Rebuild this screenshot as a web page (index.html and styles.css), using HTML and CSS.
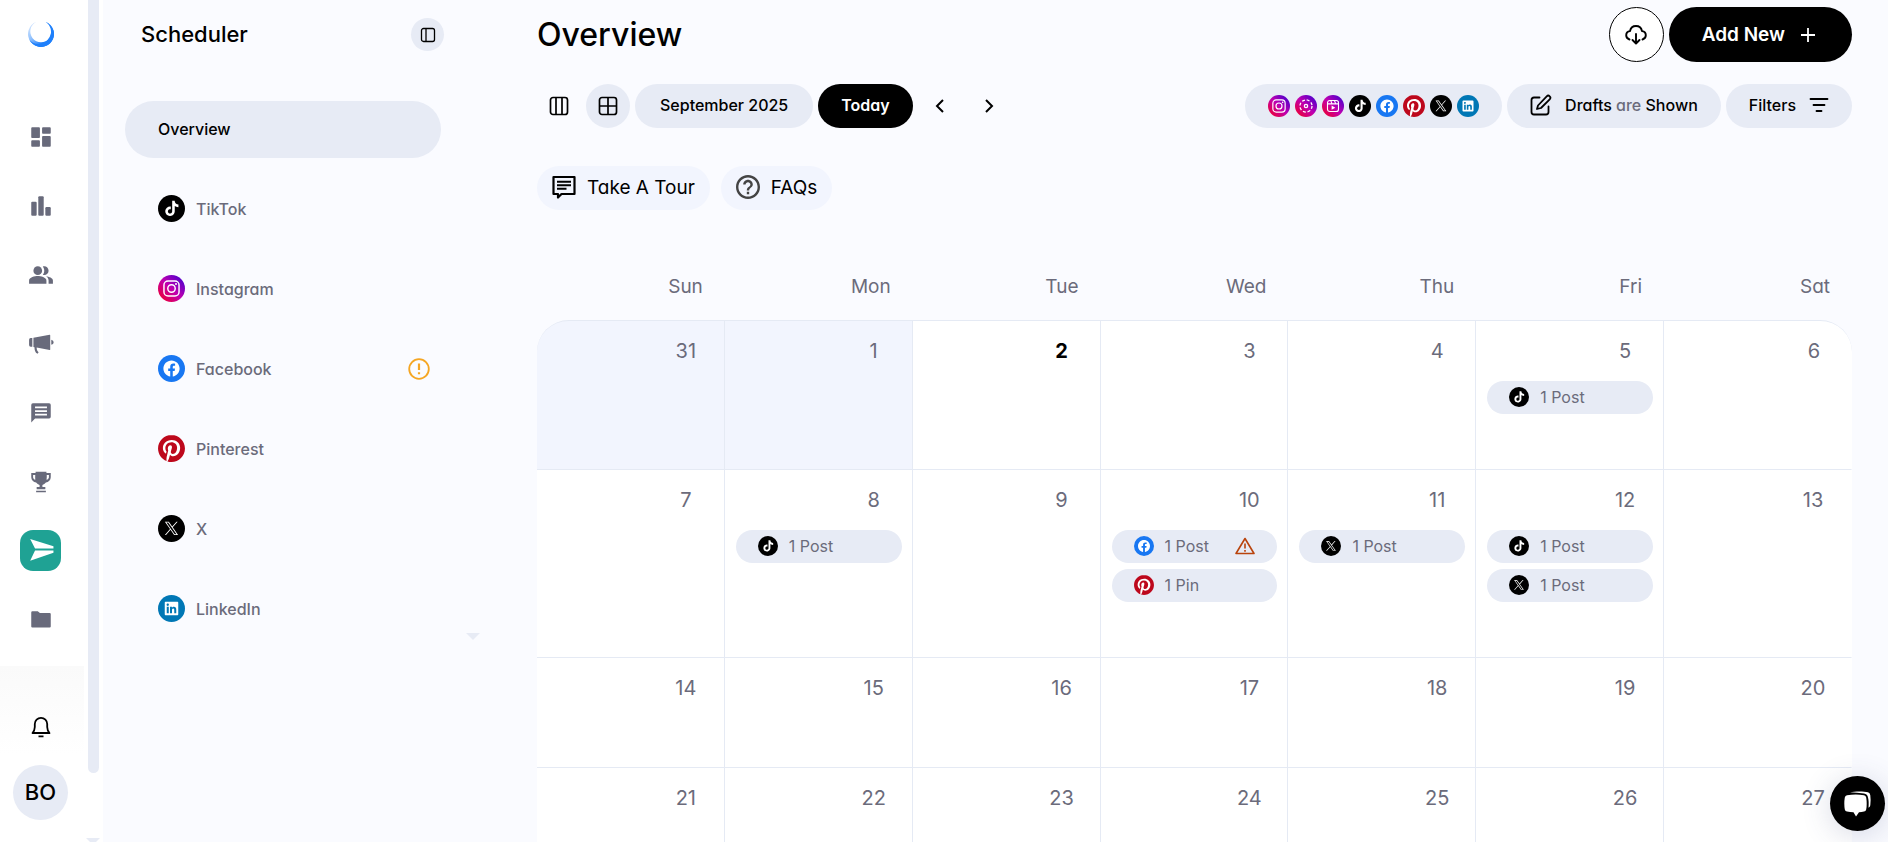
FILE: index.html
```
<!DOCTYPE html>
<html lang="en">

<head>
    <meta charset="UTF-8">
    <meta name="viewport" content="width=device-width, initial-scale=1.0">
    <title>Scheduler</title>
    <link rel="stylesheet" href="styles.css">
</head>

<body>

    <!-- Shared icons -->
    <svg class="sprite" aria-hidden="true">
        <defs>
            <linearGradient id="igGradient" x1="0" y1="1" x2="1" y2="0">
                <stop offset="0.05" stop-color="#f00028" />
                <stop offset="0.5" stop-color="#c000b0" />
                <stop offset="0.95" stop-color="#3f00d0" />
            </linearGradient>
            <linearGradient id="logoGradient" x1="0" y1="0.2" x2="0.6" y2="0.8">
                <stop offset="0" stop-color="#d3e5fe" />
                <stop offset="0.5" stop-color="#8fc0fd" />
                <stop offset="1" stop-color="#1f80fb" />
            </linearGradient>
        </defs>
        <symbol id="tiktok" viewBox="0 0 24 24">
            <circle cx="12" cy="12" r="12" />
            <path transform="translate(5.6 5.2) scale(.56)" fill="#fff" d="M12.525.02c1.31-.02 2.61-.01 3.91-.02.08 1.53.63 3.09 1.75 4.17 1.12 1.11 2.7 1.62 4.24 1.79v4.03c-1.44-.05-2.89-.35-4.2-.97-.57-.26-1.1-.59-1.62-.93-.01 2.92.01 5.84-.02 8.75-.08 1.4-.54 2.79-1.35 3.94-1.31 1.92-3.58 3.17-5.91 3.21-1.43.08-2.86-.31-4.08-1.03-2.02-1.19-3.44-3.37-3.65-5.71-.02-.5-.03-1-.01-1.49.18-1.9 1.12-3.72 2.58-4.96 1.66-1.44 3.98-2.13 6.15-1.72.02 1.48-.04 2.96-.04 4.44-.99-.32-2.15-.23-3.02.37-.63.41-1.11 1.04-1.36 1.75-.21.51-.15 1.07-.14 1.61.24 1.64 1.82 3.02 3.5 2.87 1.12-.01 2.19-.66 2.77-1.61.19-.33.4-.67.41-1.06.1-1.79.06-3.57.07-5.36.01-4.03-.01-8.05.02-12.07z" />
        </symbol>
        <symbol id="instagram" viewBox="0 0 24 24">
            <circle cx="12" cy="12" r="12" fill="url(#igGradient)" />
            <g fill="none" stroke="#fff" stroke-width="1.3">
                <rect x="5.3" y="5.3" width="13.4" height="13.4" rx="3.6" />
                <circle cx="12" cy="12" r="3.3" />
            </g>
            <circle cx="16" cy="8" r=".9" fill="#fff" />
        </symbol>
        <symbol id="story" viewBox="0 0 24 24">
            <circle cx="12" cy="12" r="12" fill="url(#igGradient)" />
            <g fill="none" stroke="#fff" stroke-width="1.4">
                <circle cx="12" cy="12" r="6.6" stroke-dasharray="3.2 1.98" />
                <circle cx="12" cy="12" r="1.8" />
            </g>
        </symbol>
        <symbol id="reel" viewBox="0 0 24 24">
            <circle cx="12" cy="12" r="12" fill="url(#igGradient)" />
            <path d="M8.5 6h7A2.5 2.5 0 0 1 18 8.5v7a2.5 2.5 0 0 1-2.5 2.5h-7A2.5 2.5 0 0 1 6 15.5v-7A2.5 2.5 0 0 1 8.5 6zM6 9.7h12M9.5 6l1.5 3.7M13.5 6l1.5 3.7" fill="none" stroke="#fff" stroke-width="1.2" />
            <path d="M10.5 11.5v4.6l4-2.3z" fill="#fff" />
        </symbol>
        <symbol id="facebook" viewBox="0 0 24 24">
            <circle cx="12" cy="12" r="12" fill="#1877f2" />
            <path transform="translate(4.8 4.8) scale(.6)" fill="#fff" d="M24 12.073c0-6.627-5.373-12-12-12s-12 5.373-12 12c0 5.99 4.388 10.954 10.125 11.854v-8.385H7.078v-3.47h3.047V9.43c0-3.007 1.792-4.669 4.533-4.669 1.312 0 2.686.235 2.686.235v2.953H15.83c-1.491 0-1.956.925-1.956 1.874v2.25h3.328l-.532 3.47h-2.796v8.385C19.612 23.027 24 18.062 24 12.073z" />
        </symbol>
        <symbol id="pinterest" viewBox="0 0 24 24">
            <circle cx="12" cy="12" r="11.5" fill="#fff" />
            <path fill="#bd081c" d="M12.017 0C5.396 0 .029 5.367.029 11.987c0 5.079 3.158 9.417 7.618 11.162-.105-.949-.199-2.403.041-3.439.219-.937 1.406-5.957 1.406-5.957s-.359-.72-.359-1.781c0-1.663.967-2.911 2.168-2.911 1.024 0 1.518.769 1.518 1.688 0 1.029-.653 2.567-.992 3.992-.285 1.193.6 2.165 1.775 2.165 2.128 0 3.768-2.245 3.768-5.487 0-2.861-2.063-4.869-5.008-4.869-3.41 0-5.409 2.562-5.409 5.199 0 1.033.394 2.143.889 2.741.099.12.112.225.085.345-.09.375-.293 1.199-.334 1.363-.053.225-.172.271-.401.165-1.495-.69-2.433-2.878-2.433-4.646 0-3.776 2.748-7.252 7.92-7.252 4.158 0 7.392 2.967 7.392 6.923 0 4.135-2.607 7.462-6.233 7.462-1.214 0-2.354-.629-2.758-1.379l-.749 2.848c-.269 1.045-1.004 2.352-1.498 3.146 1.123.345 2.306.535 3.55.535 6.607 0 11.985-5.365 11.985-11.987C23.97 5.39 18.592.026 11.985.026L12.017 0z" />
        </symbol>
        <symbol id="x" viewBox="0 0 24 24">
            <circle cx="12" cy="12" r="12" />
            <path transform="translate(6.1 6) scale(.49)" fill="#fff" d="M14.258 10.152 23.176 0h-2.113l-7.747 8.813L7.133 0H0l9.352 13.328L0 23.973h2.113l8.176-9.309 6.531 9.309h7.133zm-2.895 3.293-.949-1.328L2.875 1.56h3.246l6.086 8.523.945 1.328 7.91 11.078h-3.246z" />
        </symbol>
        <symbol id="linkedin" viewBox="0 0 24 24">
            <circle cx="12" cy="12" r="12" fill="#0077b5" />
            <path transform="translate(6 6) scale(.5)" fill="#fff" d="M20.447 20.452h-3.554v-5.569c0-1.328-.027-3.037-1.852-3.037-1.853 0-2.136 1.445-2.136 2.939v5.667H9.351V9h3.414v1.561h.046c.477-.9 1.637-1.85 3.37-1.85 3.601 0 4.267 2.37 4.267 5.455v6.286zM5.337 7.433c-1.144 0-2.063-.926-2.063-2.065 0-1.138.92-2.063 2.063-2.063 1.14 0 2.064.925 2.064 2.063 0 1.139-.925 2.065-2.064 2.065zm1.782 13.019H3.555V9h3.564v11.452zM22.225 0H1.771C.792 0 0 .774 0 1.729v20.542C0 23.227.792 24 1.771 24h20.451C23.2 24 24 23.227 24 22.271V1.729C24 .774 23.2 0 22.222 0h.003z" />
        </symbol>
    </svg>

    <div class="app">

        <aside class="rail">
            <a class="logo" href="#" aria-label="Home">
                <svg viewBox="0 0 26 26">
                    <path d="M8.5.8A13 13 0 1 0 17.5.8 10.700 10.700 0 1 1 8.5.8z" fill="url(#logoGradient)" />
                    <path d="M17.5.8A13 13 0 1 1 1 18Q4 23 11 23 21 22 23 12 23.5 5 17.5.8z" fill="#1f80fb" />
                </svg>
            </a>
            <nav class="rail-nav">
                <a href="#" aria-label="Dashboard"><svg viewBox="0 0 24 24"><path d="M4 13h6c.55 0 1-.45 1-1V4c0-.55-.45-1-1-1H4c-.55 0-1 .45-1 1v8c0 .55.45 1 1 1zm0 8h6c.55 0 1-.45 1-1v-4c0-.55-.45-1-1-1H4c-.55 0-1 .45-1 1v4c0 .55.45 1 1 1zm10 0h6c.55 0 1-.45 1-1v-8c0-.55-.45-1-1-1h-6c-.55 0-1 .45-1 1v8c0 .55.45 1 1 1zM13 4v4c0 .55.45 1 1 1h6c.55 0 1-.45 1-1V4c0-.55-.45-1-1-1h-6c-.55 0-1 .45-1 1z" /></svg></a>
                <a href="#" aria-label="Analytics"><svg viewBox="0 0 24 24"><rect x="3" y="8" width="5" height="13" rx="1" /><rect x="9.5" y="3" width="5" height="18" rx="1" /><rect x="16" y="13" width="5" height="8" rx="1" /></svg></a>
                <a href="#" aria-label="Audience"><svg viewBox="0 0 24 24"><path d="M16.67 13.13C18.04 14.06 19 15.32 19 17v3h4v-3c0-2.18-3.57-3.47-6.33-3.87z" /><circle cx="9" cy="8" r="4" /><path d="M15 12c2.21 0 4-1.79 4-4s-1.79-4-4-4c-.47 0-.91.1-1.33.24C14.5 5.27 15 6.58 15 8s-.5 2.73-1.33 3.76c.42.14.86.24 1.33.24zM9 13c-2.67 0-8 1.34-8 4v3h16v-3c0-2.66-5.33-4-8-4z" /></svg></a>
                <a href="#" aria-label="Campaigns"><svg viewBox="0 0 24 24"><path d="M2.500 6.500H4v8H2.500Q1 14.500 1 13V8Q1 6.500 2.500 6.500zM5 6.300 20 3.500q.5 0 .5.5v13q0 .5-.5.5L8 15.200c0 2 .5 3 1.800 4.500l-1 1.300C6.500 19.800 6 17.500 6 14.900l-1-.2zM21.500 8q2.200.5 2.200 2.300t-2.200 2.400z" /></svg></a>
                <a href="#" aria-label="Messages"><svg viewBox="0 0 24 24"><path fill-rule="evenodd" d="M4.500 3h15Q21 3 21 4.500v11q0 1.500-1.500 1.500H6.500L3 20.800V4.500Q3 3 4.500 3zM6.500 6v1.700h11V6zm0 3.400v1.700h11V9.400zm0 3.300v1.700h11v-1.700z" /></svg></a>
                <a href="#" aria-label="Contests"><svg viewBox="0 0 24 24"><path fill-rule="evenodd" d="M7 2.500h10v1.300h4V7.500c0 2.500-2 4.300-4.500 5-.8 1-2 1.900-3.200 2.300V16.500H16v2.200H8v-2.200h2.700v-1.700C9.500 14.400 8.300 13.500 7.500 12.500 5 11.800 3 10 3 7.500V3.800h4zm-2.300 3v2c0 1 .8 2 2 2.500Q6.500 7.500 6.700 5.500zm12.600 0q.2 2-.2 4.500c1.400-.5 2.200-1.500 2.200-2.500v-2zM7.500 20h9v1.500h-9z" /></svg></a>
                <a class="active" href="#" aria-label="Scheduler"><svg viewBox="0 0 24 24"><path d="M2 1 23.500 7.500v2.300H6.500zM6.500 11.500h17v2.200L2 21z" /></svg></a>
                <a href="#" aria-label="Library"><svg viewBox="0 0 24 24"><path d="M4 4h5l2 1.500h9q1 0 1 1V18q0 1-1 1H4q-1 0-1-1V5q0-1 1-1z" /></svg></a>
            </nav>
            <div class="rail-footer">
                <button class="bell" aria-label="Notifications">
                    <svg viewBox="0 0 20 22" fill="none" stroke="#000" stroke-width="1.8"><path d="M1.500 17q2.200-2.300 2.300-6V8a6.200 6.200 0 0 1 12.400 0v3q.1 3.700 2.300 6zM7.500 20.300h5" stroke-linejoin="round" /></svg>
                </button>
                <button class="avatar">BO</button>
            </div>
            <span class="scroll-thumb"></span>
            <span class="scroll-arrow"></span>
        </aside>

        <aside class="sidebar">
            <div class="sidebar-head">
                <h2>Scheduler</h2>
                <button class="collapse" aria-label="Collapse sidebar">
                    <svg viewBox="0 0 16 16" fill="none" stroke="#000" stroke-width="1.3"><rect x="1.5" y="1.5" width="13" height="13" rx="2" /><path d="M6 1.500v13" /></svg>
                </button>
            </div>
            <nav class="channels">
                <a class="active" href="#">Overview</a>
                <a href="#"><svg><use href="#tiktok" /></svg>TikTok</a>
                <a href="#"><svg><use href="#instagram" /></svg>Instagram</a>
                <a href="#"><svg><use href="#facebook" /></svg>Facebook
                    <svg class="alert" viewBox="0 0 22 22" fill="none" stroke="#f5a623" stroke-width="1.8"><circle cx="11" cy="11" r="9.8" /><path d="M11 5.500v6.500M11 14.200v2" stroke-width="2.200" /></svg>
                </a>
                <a href="#"><svg><use href="#pinterest" /></svg>Pinterest</a>
                <a href="#"><svg><use href="#x" /></svg>X</a>
                <a href="#"><svg><use href="#linkedin" /></svg>LinkedIn</a>
            </nav>
            <span class="scroll-arrow"></span>
        </aside>

        <main>
            <header class="page-head">
                <h1>Overview</h1>
                <div class="actions">
                    <button class="download" aria-label="Download">
                        <svg viewBox="0 0 22 22" fill="none" stroke="#000" stroke-width="1.9" stroke-linecap="round" stroke-linejoin="round"><path d="M4.500 15.500C2.500 14.800 1.200 13.200 1.200 11.200 1.200 9 2.800 7.400 5 7.100 5.600 4 8 2 11 2s5.400 2 6 5.100c2.200.3 3.800 1.900 3.800 4.100 0 2-1.300 3.600-3.300 4.300M11 10v9M7.500 16l3.500 3.500 3.500-3.500" /></svg>
                    </button>
                    <button class="add-new">Add New
                        <svg viewBox="0 0 16 16" fill="none" stroke="#fff" stroke-width="1.8"><path d="M8 1v14M1 8h14" /></svg>
                    </button>
                </div>
            </header>

            <div class="toolbar">
                <div class="group">
                    <button class="round" aria-label="Week view">
                        <svg viewBox="0 0 20 20" fill="none" stroke="#000" stroke-width="1.7"><rect x="1.5" y="1.5" width="17" height="17" rx="2.5" /><path d="M7 1.500v17M13 1.500v17" /></svg>
                    </button>
                    <button class="round selected" aria-label="Month view">
                        <svg viewBox="0 0 20 20" fill="none" stroke="#000" stroke-width="1.7"><rect x="1.5" y="1.5" width="17" height="17" rx="2.5" /><path d="M10 1.500v17M1.500 10h17" /></svg>
                    </button>
                    <button class="pill">September 2025</button>
                    <button class="pill today-btn">Today</button>
                    <button class="round" aria-label="Previous month">
                        <svg viewBox="0 0 20 20" fill="none" stroke="#000" stroke-width="2"><path d="M13 4 7 10l6 6" /></svg>
                    </button>
                    <button class="round" aria-label="Next month">
                        <svg viewBox="0 0 20 20" fill="none" stroke="#000" stroke-width="2"><path d="M7 4l6 6-6 6" /></svg>
                    </button>
                </div>
                <div class="group">
                    <button class="pill networks" aria-label="Networks">
                        <svg><use href="#instagram" /></svg>
                        <svg><use href="#story" /></svg>
                        <svg><use href="#reel" /></svg>
                        <svg><use href="#tiktok" /></svg>
                        <svg><use href="#facebook" /></svg>
                        <svg><use href="#pinterest" /></svg>
                        <svg><use href="#x" /></svg>
                        <svg><use href="#linkedin" /></svg>
                    </button>
                    <button class="pill drafts">
                        <svg viewBox="0 0 22 22" fill="none" stroke="#000" stroke-width="1.8" stroke-linecap="round" stroke-linejoin="round"><path d="M9.500 3.500H4Q1.500 3.500 1.500 6v12q0 2.500 2.500 2.500h12q2.500 0 2.500-2.500v-5.500M8 11.500l8.700-9.200a2.100 2.100 0 0 1 3 3L11 14l-4 1z" /></svg>
                        <span>Drafts <em>are</em> Shown</span>
                    </button>
                    <button class="pill filters">Filters
                        <svg viewBox="0 0 20 20" fill="none" stroke="#000" stroke-width="1.8" stroke-linecap="round"><path d="M1.500 4h17M4.500 10h11M7.500 16h5" /></svg>
                    </button>
                </div>
            </div>

            <div class="help">
                <button>
                    <svg viewBox="0 0 24 24" fill="none" stroke="#000" stroke-width="2.2"><path d="M1.500 2h21v17H9.500L6 22.500V19H1.500z" stroke-linejoin="round" /><path d="M5 6.800h14M5 10.300h14M5 13.800h9.500" stroke-width="2" /></svg>
                    Take A Tour
                </button>
                <button>
                    <svg viewBox="2 2 20 20" fill="#444"><path d="M11 18h2v-2h-2v2zm1-16C6.480 2 2 6.480 2 12s4.480 10 10 10 10-4.480 10-10S17.520 2 12 2zm0 18c-4.410 0-8-3.590-8-8s3.590-8 8-8 8 3.590 8 8-3.590 8-8 8zm0-14c-2.210 0-4 1.790-4 4h2c0-1.100.9-2 2-2s2 .9 2 2c0 2-3 1.750-3 5h2c0-2.250 3-2.500 3-5 0-2.210-1.790-4-4-4z" /></svg>
                    FAQs
                </button>
            </div>

            <table class="calendar">
                <thead>
                    <tr>
                        <th>Sun</th>
                        <th>Mon</th>
                        <th>Tue</th>
                        <th>Wed</th>
                        <th>Thu</th>
                        <th>Fri</th>
                        <th>Sat</th>
                    </tr>
                </thead>
                <tbody>
                    <tr>
                        <td class="past"><time>31</time></td>
                        <td class="past"><time>1</time></td>
                        <td class="current"><time>2</time></td>
                        <td><time>3</time></td>
                        <td><time>4</time></td>
                        <td><time>5</time>
                            <a class="post" href="#"><svg><use href="#tiktok" /></svg>1 Post</a>
                        </td>
                        <td><time>6</time></td>
                    </tr>
                    <tr>
                        <td><time>7</time></td>
                        <td><time>8</time>
                            <a class="post" href="#"><svg><use href="#tiktok" /></svg>1 Post</a>
                        </td>
                        <td><time>9</time></td>
                        <td><time>10</time>
                            <a class="post" href="#"><svg><use href="#facebook" /></svg>1 Post
                                <svg class="warn" viewBox="0 0 20 18" fill="none" stroke="#b9430c" stroke-width="1.6" stroke-linejoin="round"><path d="M10 1.500 19 16.500H1zM10 6.500v5M10 13v1.800" /></svg>
                            </a>
                            <a class="post" href="#"><svg><use href="#pinterest" /></svg>1 Pin</a>
                        </td>
                        <td><time>11</time>
                            <a class="post" href="#"><svg><use href="#x" /></svg>1 Post</a>
                        </td>
                        <td><time>12</time>
                            <a class="post" href="#"><svg><use href="#tiktok" /></svg>1 Post</a>
                            <a class="post" href="#"><svg><use href="#x" /></svg>1 Post</a>
                        </td>
                        <td><time>13</time></td>
                    </tr>
                    <tr>
                        <td><time>14</time></td>
                        <td><time>15</time></td>
                        <td><time>16</time></td>
                        <td><time>17</time></td>
                        <td><time>18</time></td>
                        <td><time>19</time></td>
                        <td><time>20</time></td>
                    </tr>
                    <tr>
                        <td><time>21</time></td>
                        <td><time>22</time></td>
                        <td><time>23</time></td>
                        <td><time>24</time></td>
                        <td><time>25</time></td>
                        <td><time>26</time></td>
                        <td><time>27</time></td>
                    </tr>
                </tbody>
            </table>
        </main>
    </div>

    <button class="chat" aria-label="Open chat">
        <svg viewBox="0 0 27 26">
            <path d="M6 1.200C11 .2 20 .2 24 1.200q2 .5 2.300 3 .7 5 0 10-.2 1.800-1.800 2.600Q25 10 24 6.500 23.500 3 20 2.500 13 1.600 6 1.200z" fill="#fff" />
            <path d="M3 4.200q9-1.500 17 0 1.800.4 2.200 2.200 1 6.500 0 12-.4 1.800-2.200 2.200-2.500.5-5 .6L12 25.500l-2.500-4.300q-3.500-.1-6.500-.6-1.800-.4-2.200-2.200-1-6 0-12Q1.200 4.600 3 4.200z" fill="#fff" />
        </svg>
    </button>

</body>

</html>
```
FILE: styles.css
```
:root {
    --bg: #fafbff;
    --soft: #f2f5fe;
    --pill: #e7ebf5;
    --line: #e5eaf4;
    --muted: #6b6b7b;
}

* {
    box-sizing: border-box;
}

body {
    margin: 0;
    background-color: var(--bg);
    color: #000;
    font-family: Inter, "Liberation Sans", sans-serif;
    font-feature-settings: "cv11";
    font-size: 16px;
    overflow: hidden;
}

button {
    font: inherit;
    font-feature-settings: inherit;
    color: inherit;
    border: none;
    background: none;
    padding: 0;
    cursor: pointer;
    display: flex;
    align-items: center;
    justify-content: center;
}

a {
    color: inherit;
    text-decoration: none;
}

svg {
    display: block;
    flex-shrink: 0;
}

.sprite {
    position: absolute;
    width: 0;
    height: 0;
}

.app {
    display: flex;
    height: 100vh;
}

/* Icon rail on the left */
.rail {
    position: relative;
    flex: 0 0 103px;
    padding-right: 19px;
    background-color: #fff;
    display: flex;
    flex-direction: column;
    align-items: center;
}

.logo {
    margin-top: 21px;
    margin-right: 3px;
}

.logo svg {
    width: 26px;
    height: 26px;
}

.rail-nav {
    display: flex;
    flex-direction: column;
    gap: 28px;
    margin-top: 69px;
    margin-right: 3px;
}

.rail-nav a {
    width: 41px;
    height: 41px;
    border-radius: 13px;
    display: flex;
    align-items: center;
    justify-content: center;
}

.rail-nav svg {
    width: 26px;
    height: 26px;
    fill: #686a7b;
}

.rail-nav .active {
    background-color: #1fa294;
}

.rail-nav .active svg {
    fill: #fff;
}

.rail-footer {
    align-self: stretch;
    margin-top: auto;
    padding: 50px 3px 22px 0;
    background: linear-gradient(#fafafa, #fff 50%);
    display: flex;
    flex-direction: column;
    align-items: center;
    gap: 27px;
}

.bell svg {
    width: 20px;
    height: 22px;
}

.avatar {
    width: 55px;
    height: 55px;
    padding-bottom: 2px;
    border-radius: 50%;
    background-color: var(--pill);
    font-size: 22px;
    font-weight: 500;
}

/* Custom scrollbars */
.scroll-thumb {
    position: absolute;
    top: 0;
    right: 4px;
    bottom: 69px;
    width: 11px;
    border-radius: 0 0 6px 6px;
    background-color: var(--pill);
}

.scroll-arrow {
    position: absolute;
    right: 3px;
    bottom: -3px;
    border: 7px solid transparent;
    border-top-color: var(--pill);
    border-bottom: none;
}

/* Channel list */
.sidebar {
    position: relative;
    flex: 0 0 380px;
    align-self: flex-start;
    padding: 18px 39px 4px 22px;
}

.sidebar-head {
    display: flex;
    align-items: center;
    justify-content: space-between;
    padding-left: 16px;
}

.sidebar-head h2 {
    margin: 0;
    padding-bottom: 2px;
    font-size: 22px;
    font-weight: 500;
}

.collapse {
    width: 33px;
    height: 33px;
    border-radius: 50%;
    background-color: var(--pill);
}

.collapse svg {
    width: 16px;
    height: 16px;
}

.channels {
    display: flex;
    flex-direction: column;
    gap: 23px;
    margin: 50px 3px 0 0;
}

.channels a {
    height: 57px;
    padding: 0 11px 2px 33px;
    border-radius: 29px;
    display: flex;
    align-items: center;
    gap: 11px;
    color: var(--muted);
    font-weight: 500;
}

.channels .active {
    background-color: var(--pill);
    color: #000;
}

.channels svg {
    width: 27px;
    height: 27px;
}

.channels .alert {
    width: 22px;
    height: 22px;
    margin-left: auto;
}

.sidebar .scroll-arrow {
    bottom: 2px;
}

/* Main column */
main {
    flex: 1;
    min-width: 0;
    padding: 7px 36px 0 54px;
    overflow: hidden;
}

.page-head,
.toolbar {
    display: flex;
    align-items: center;
    justify-content: space-between;
}

h1 {
    margin: 0;
    font-size: 32px;
    font-weight: 500;
}

.actions,
.group {
    display: flex;
    gap: 5px;
}

.download {
    width: 55px;
    height: 55px;
    border: 1px solid #000;
    border-radius: 50%;
    background-color: #fff;
}

.download svg {
    width: 22px;
    height: 22px;
}

.add-new {
    height: 55px;
    padding: 0 36px 0 33px;
    border-radius: 28px;
    background-color: #000;
    color: #fff;
    font-size: 19px;
    font-weight: 600;
    gap: 15px;
}

.add-new svg {
    width: 16px;
    height: 16px;
}

.toolbar {
    margin-top: 22px;
}

.round {
    width: 44px;
    height: 44px;
    border-radius: 50%;
}

.round svg,
.filters svg {
    width: 20px;
    height: 20px;
}

.selected,
.pill {
    background-color: var(--pill);
}

.pill {
    height: 44px;
    padding: 0 25px 2px;
    border-radius: 22px;
    font-weight: 500;
}

.today-btn {
    padding: 0 23px 2px;
    background-color: #000;
    color: #fff;
    font-weight: 600;
}

.networks {
    gap: 5px;
    padding: 0 23px;
}

.networks svg,
.drafts svg {
    width: 22px;
    height: 22px;
}

.drafts {
    padding: 0 23px 2px;
    gap: 13px;
}

.drafts em {
    font-style: normal;
    color: var(--muted);
}

.filters {
    padding: 0 23px 2px;
    gap: 13px;
}

.help {
    display: flex;
    gap: 11px;
    margin-top: 38px;
}

.help button {
    height: 44px;
    padding: 0 15px 2px;
    border-radius: 22px;
    background-color: var(--soft);
    font-size: 19px;
    gap: 11px;
}

.help svg {
    width: 24px;
    height: 24px;
}

/* Calendar */
.calendar {
    width: 100%;
    margin-top: 55px;
    table-layout: fixed;
    border-collapse: separate;
    border-spacing: 0;
    color: var(--muted);
    font-size: 20px;
    line-height: 24px;
}

.calendar th {
    padding: 10px 22px 21px 0;
    font-size: 19px;
    font-weight: 400;
    text-align: right;
}

.calendar td {
    height: 110px;
    padding: 18px 10px 49px 11px;
    border-top: 1px solid var(--line);
    border-right: 1px solid var(--line);
    background-color: #fff;
    vertical-align: top;
}

.calendar td:last-child {
    border-right-color: transparent;
}

.calendar tbody tr:first-child td:first-child {
    border-top-left-radius: 32px;
}

.calendar tbody tr:first-child td:last-child {
    border-right: none;
    border-top-right-radius: 32px;
}

.calendar .past {
    background-color: var(--soft);
}

.calendar .current time {
    color: #000;
    font-weight: 700;
}

.calendar time {
    display: block;
    width: 44px;
    margin: 0 6px 18px auto;
    text-align: center;
}

.post {
    display: flex;
    align-items: center;
    gap: 11px;
    height: 33px;
    margin-bottom: 6px;
    padding: 0 22px 1px;
    border-radius: 17px;
    background-color: var(--pill);
    font-size: 16px;
}

.post svg {
    width: 20px;
    height: 20px;
}

.post .warn {
    margin-left: auto;
}

.chat {
    position: fixed;
    right: 3px;
    bottom: 11px;
    width: 55px;
    height: 55px;
    border-radius: 50%;
    background-color: #000;
    box-shadow: 0 4px 30px rgba(60, 70, 120, 0.2);
}

.chat svg {
    width: 27px;
    height: 26px;
}
```
